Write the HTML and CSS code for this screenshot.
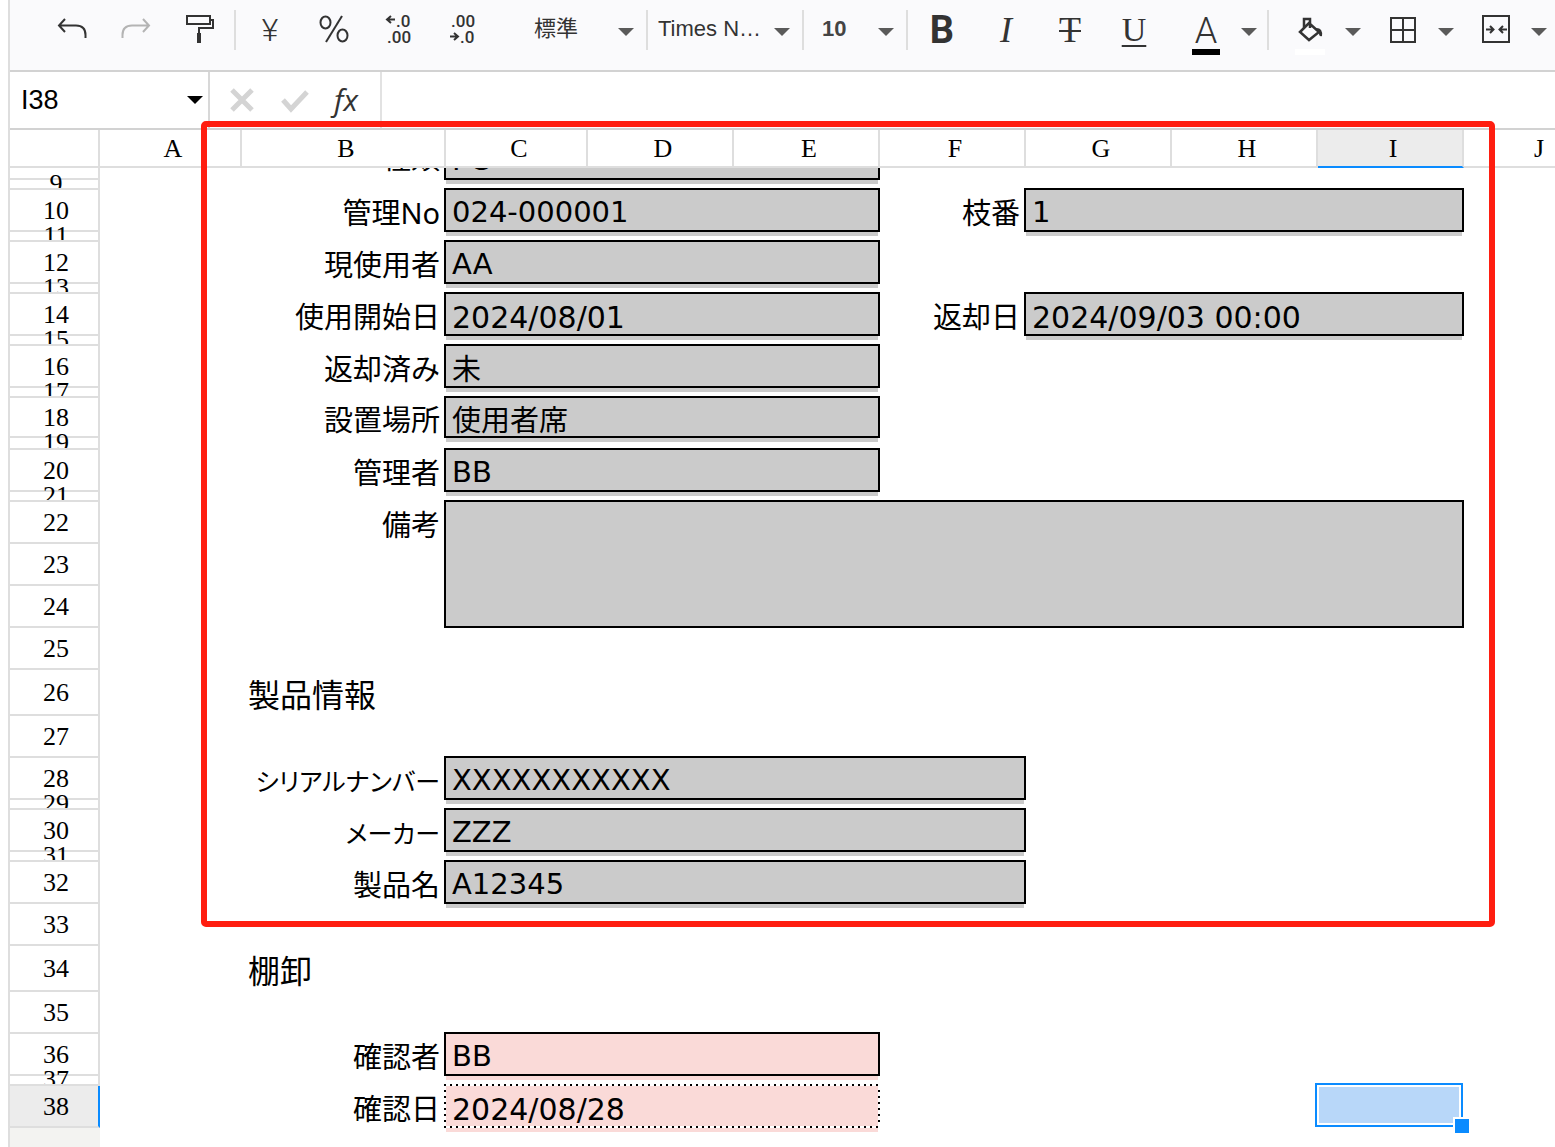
FILE: index.html
```html
<!DOCTYPE html>
<html lang="ja">
<head>
<meta charset="utf-8">
<meta name="viewport" content="width=device-width, initial-scale=1">
<title>スプレッドシート</title>
<link rel="stylesheet" href="styles.css">
</head>
<body>
<main class="app">
  <div class="toolbar" role="toolbar" aria-label="書式">
    <button class="tool" type="button" aria-label="元に戻す"><svg width="32" height="32" viewBox="0 0 32 32"><path d="M9 5 3 11.500 9 18M3 11.500h17q9.500 0 9.500 9.500v3"/></svg></button>
    <button class="tool off" type="button" aria-label="やり直し"><svg width="32" height="32" viewBox="0 0 32 32"><path d="M23 5l6 6.500L23 18M29 11.500H12q-9.500 0-9.500 9.500v3"/></svg></button>
    <button class="tool" type="button" aria-label="書式のコピー"><svg width="32" height="32" viewBox="0 0 32 32"><path d="M3 2h23v8H3zM26 6h3v8H15v6"/><path class="solid" d="M13 19h4v10h-4z"/></svg></button>
    <span class="sep"></span>
    <button class="tool" type="button" aria-label="通貨"><span class="yen">¥</span></button>
    <button class="tool" type="button" aria-label="パーセント"><svg width="32" height="32" viewBox="0 0 32 32"><ellipse cx="7.500" cy="8.500" rx="5" ry="6"/><ellipse cx="24.500" cy="21.500" rx="5" ry="6"/><path d="M24 2 8 28"/></svg></button>
    <button class="tool" type="button" aria-label="小数点以下の桁数を減らす"><svg width="32" height="32" viewBox="0 0 32 32"><path d="M9 2 5 5.500 9 9M5 5.500h8"/><text x="14" y="13">.0</text><text x="5" y="29">.00</text></svg></button>
    <button class="tool" type="button" aria-label="小数点以下の桁数を増やす"><svg width="32" height="32" viewBox="0 0 32 32"><path d="M8 19l4 3.500L8 26M12 22.500H4"/><text x="5" y="13">.00</text><text x="14" y="29">.0</text></svg></button>
    <span class="picker format"><select aria-label="表示形式"><option>標準</option></select></span>
    <span class="sep bare"></span>
    <span class="picker font"><select aria-label="フォント"><option>Times N…</option></select></span>
    <span class="sep bare"></span>
    <span class="picker size"><select aria-label="フォントサイズ"><option>10</option></select></span>
    <span class="sep near"></span>
    <button class="tool" type="button" aria-label="太字"><span class="bold">B</span></button>
    <button class="tool" type="button" aria-label="斜体"><span class="italic">I</span></button>
    <button class="tool" type="button" aria-label="取り消し線"><span class="strike">T</span></button>
    <button class="tool" type="button" aria-label="下線"><span class="under">U</span></button>
    <span class="split first"><button class="tool" type="button" aria-label="文字の色"><span class="color">A</span></button><button class="more" type="button" aria-label="文字の色を選択"></button></span>
    <span class="sep wide"></span>
    <span class="split"><button class="tool" type="button" aria-label="塗りつぶし"><span class="fill"><svg width="32" height="32" viewBox="0 0 32 32"><path class="thick" d="M6 19 15 10 25 19 15 27zM10 15V6h6v9"/><path class="solid" d="M21 15q8-1 7 8-3 1-3-3z"/></svg></span></button><button class="more" type="button" aria-label="塗りつぶしの色を選択"></button></span>
    <span class="split"><button class="tool" type="button" aria-label="罫線"><svg width="32" height="32" viewBox="0 0 32 32"><path d="M4 4h24v24H4zM16 4v24M4 16h24"/></svg></button><button class="more" type="button" aria-label="罫線を選択"></button></span>
    <span class="split"><button class="tool" type="button" aria-label="セルの結合"><svg width="32" height="32" viewBox="0 0 32 32"><path d="M3 2h26v26H3zM6 15.500h7M10 12l3.500 3.500L10 19M27 15.500h-7M23 12l-3.500 3.500L23 19"/></svg></button><button class="more" type="button" aria-label="セルの結合を選択"></button></span>
  </div>

  <div class="formula-bar">
    <div class="name-box"><input type="text" value="I38" aria-label="名前ボックス"><button class="more" type="button" aria-label="名前の一覧"></button></div>
    <div class="actions">
      <button type="button" aria-label="キャンセル"><svg width="32" height="32" viewBox="0 0 32 32"><path d="M6 6l20 20M26 6 6 26"/></svg></button>
      <button type="button" aria-label="入力"><svg width="32" height="32" viewBox="0 0 32 32"><path d="M4 16l8 9L28 8"/></svg></button>
      <button class="fx" type="button" aria-label="関数の挿入">fx</button>
    </div>
    <input class="formula" type="text" aria-label="数式">
  </div>

  <div class="sheet">
    <table>
      <colgroup><col class="c-head"><col class="c-narrow"><col class="c-label"><col class="c-narrow"><col><col><col><col><col><col><col></colgroup>
      <thead>
        <tr><td class="corner"></td><th scope="col">A</th><th scope="col">B</th><th scope="col">C</th><th scope="col">D</th><th scope="col">E</th><th scope="col">F</th><th scope="col">G</th><th scope="col">H</th><th scope="col" class="current">I</th><th scope="col">J</th></tr>
      </thead>
      <tbody>
        <tr class="cut"><th scope="row"></th><td></td><td><div class="label">種類</div></td><td colspan="3"><div class="field">PC</div></td><td colspan="5"></td></tr>
        <tr class="gap"><th scope="row"><div>9</div></th><td colspan="10"></td></tr>
        <tr><th scope="row"><div>10</div></th><td></td><td><div class="label">管理No</div></td><td colspan="3"><div class="field">024-000001</div></td><td><div class="label">枝番</div></td><td colspan="3"><div class="field">1</div></td><td></td></tr>
        <tr class="gap"><th scope="row"><div>11</div></th><td colspan="10"></td></tr>
        <tr><th scope="row"><div>12</div></th><td></td><td><div class="label">現使用者</div></td><td colspan="3"><div class="field">AA</div></td><td colspan="5"></td></tr>
        <tr class="gap"><th scope="row"><div>13</div></th><td colspan="10"></td></tr>
        <tr><th scope="row"><div>14</div></th><td></td><td><div class="label">使用開始日</div></td><td colspan="3"><div class="field low date">2024/08/01</div></td><td><div class="label">返却日</div></td><td colspan="3"><div class="field low date">2024/09/03 00:00</div></td><td></td></tr>
        <tr class="gap"><th scope="row"><div>15</div></th><td colspan="10"></td></tr>
        <tr><th scope="row"><div>16</div></th><td></td><td><div class="label">返却済み</div></td><td colspan="3"><div class="field low">未</div></td><td colspan="5"></td></tr>
        <tr class="gap"><th scope="row"><div>17</div></th><td colspan="10"></td></tr>
        <tr class="short"><th scope="row"><div>18</div></th><td></td><td><div class="label">設置場所</div></td><td colspan="3"><div class="field low">使用者席</div></td><td colspan="5"></td></tr>
        <tr class="gap tall"><th scope="row"><div>19</div></th><td colspan="10"></td></tr>
        <tr><th scope="row"><div>20</div></th><td></td><td><div class="label">管理者</div></td><td colspan="3"><div class="field">BB</div></td><td colspan="5"></td></tr>
        <tr class="gap"><th scope="row"><div>21</div></th><td colspan="10"></td></tr>
        <tr><th scope="row"><div>22</div></th><td></td><td><div class="label">備考</div></td><td colspan="7" rowspan="3"><div class="field memo"></div></td><td></td></tr>
        <tr><th scope="row"><div>23</div></th><td colspan="2"></td><td></td></tr>
        <tr><th scope="row"><div>24</div></th><td colspan="2"></td><td></td></tr>
        <tr><th scope="row"><div>25</div></th><td colspan="10"></td></tr>
        <tr class="section"><th scope="row"><div>26</div></th><td></td><td colspan="9"><div class="title">製品情報</div></td></tr>
        <tr><th scope="row"><div>27</div></th><td colspan="10"></td></tr>
        <tr><th scope="row"><div>28</div></th><td></td><td><div class="label kana">シリアルナンバー</div></td><td colspan="4"><div class="field">XXXXXXXXXXX</div></td><td colspan="4"></td></tr>
        <tr class="gap"><th scope="row"><div>29</div></th><td colspan="10"></td></tr>
        <tr><th scope="row"><div>30</div></th><td></td><td><div class="label kana">メーカー</div></td><td colspan="4"><div class="field">ZZZ</div></td><td colspan="4"></td></tr>
        <tr class="gap"><th scope="row"><div>31</div></th><td colspan="10"></td></tr>
        <tr><th scope="row"><div>32</div></th><td></td><td><div class="label">製品名</div></td><td colspan="4"><div class="field">A12345</div></td><td colspan="4"></td></tr>
        <tr><th scope="row"><div>33</div></th><td colspan="10"></td></tr>
        <tr class="section"><th scope="row"><div>34</div></th><td></td><td colspan="9"><div class="title">棚卸</div></td></tr>
        <tr><th scope="row"><div>35</div></th><td colspan="10"></td></tr>
        <tr><th scope="row"><div>36</div></th><td></td><td><div class="label">確認者</div></td><td colspan="3"><div class="field pink">BB</div></td><td colspan="5"></td></tr>
        <tr class="gap"><th scope="row"><div>37</div></th><td colspan="10"></td></tr>
        <tr><th scope="row" class="current"><div>38</div></th><td></td><td><div class="label">確認日</div></td><td colspan="3"><div class="field pink dotted low date">2024/08/28</div></td><td colspan="3"></td><td class="selected"><div class="selection"></div></td><td></td></tr>
        <tr class="rest"><td class="filler"></td><td colspan="10"></td></tr>
      </tbody>
    </table>
    <div class="highlight"></div>
  </div>
</main>
</body>
</html>
```
FILE: styles.css
```css
* { box-sizing: border-box; }

html, body { height: 100%; }

body {
  margin: 0;
  overflow: hidden;
  background: #fff;
  color: #000;
  font-family: "Liberation Sans", "Noto Sans CJK JP", sans-serif;
}

button, input, select {
  margin: 0;
  padding: 0;
  border: 0;
  outline: 0;
  background: transparent;
  color: inherit;
  font: inherit;
  appearance: none;
}

.app {
  display: flex;
  flex-direction: column;
  min-height: 100%;
  margin-left: 8px;
  border-left: 2px solid #dedede;
}

/* Toolbar */
.toolbar {
  display: flex;
  align-items: flex-start;
  height: 72px;
  padding: 0 0 0 30px;
  border-bottom: 2px solid #d2d2d2;
  background: #fafafc;
  color: #333;
  font-size: 22px;
}

.toolbar > * { flex: none; }

.tool {
  display: flex;
  align-items: center;
  justify-content: center;
  width: 64px;
  height: 60px;
}

svg {
  display: block;
  overflow: visible;
  fill: none;
  stroke: #333;
  stroke-width: 2;
}

svg text {
  fill: #333;
  stroke: none;
  font: 500 17px/1 Roboto, sans-serif;
}

svg .solid { fill: #333; stroke: none; }
svg .thick { stroke-width: 2.5; }
.off svg { stroke: #b4b4b4; }

.sep {
  width: 2px;
  height: 40px;
  margin: 10px 2px 0;
  background: #dedede;
}

.sep.bare { margin: 10px 0 0; }
.sep.near { margin: 10px 2px 0 0; }
.sep.wide { margin: 10px 9px 0 0; }

.picker {
  display: flex;
  position: relative;
  height: 56px;
}

.picker select { width: 100%; }

.picker::after {
  content: "";
  position: absolute;
  top: 28px;
  right: 12px;
  border: 8px solid transparent;
  border-top-color: #5a5a5a;
  border-bottom: 0;
  pointer-events: none;
}

.format { width: 152px; }
.format select { padding-left: 40px; }
.font { width: 154px; }
.font select { padding-left: 10px; }
.size { width: 102px; font-weight: bold; color: #444; }
.size select { padding-left: 18px; }

.yen { font: 300 32px/32px Roboto, sans-serif; }
.bold { font: bold 38px/40px Roboto, sans-serif; }
.italic { font: italic 36px/36px "Liberation Serif", serif; }
.strike { font: 36px/36px "Liberation Serif", serif; text-decoration: line-through 2px; }
.under { font: 34px/36px "Liberation Serif", serif; text-decoration: underline 2px; text-underline-offset: 4px; }

.color, .fill {
  display: flex;
  justify-content: center;
  width: 28px;
  height: 44px;
  margin-top: 6px;
  border-bottom: 6px solid #000;
  font: 300 36px/40px Roboto, sans-serif;
}

.fill { width: 30px; border-color: #fff; }
.fill svg { margin-top: 2px; }

.split { display: flex; width: 93px; }
.split.first { margin-left: 8px; }

.more {
  display: flex;
  align-items: center;
  justify-content: center;
  width: 22px;
  height: 64px;
}

.more::after {
  content: "";
  border: 8px solid transparent;
  border-top-color: #5a5a5a;
  border-bottom: 0;
}

/* Formula bar */
.formula-bar {
  display: flex;
  height: 58px;
  border-bottom: 2px solid #d2d2d2;
}

.name-box {
  display: flex;
  align-items: center;
  width: 200px;
  padding: 0 2px 0 11px;
  border-right: 2px solid #d8d8d8;
  font-size: 27px;
}

.name-box input { flex: 1; min-width: 0; }
.name-box .more::after { border-top-color: #000; }

.actions {
  display: flex;
  align-items: center;
  width: 172px;
  padding-left: 16px;
  gap: 21px;
  border-right: 2px solid #e2e2e2;
}

.actions svg { stroke: #d4d4d4; stroke-width: 5; }
.fx { width: 28px; color: #333; font: italic 500 30px/36px "Open Sans", sans-serif; }
.formula { flex: 1; min-width: 0; padding: 0 12px; font-size: 27px; }

/* Sheet */
.sheet {
  position: relative;
  flex: 1;
}

table {
  width: 1600px;
  table-layout: fixed;
  border-spacing: 0;
}

col { width: 146px; }
.c-head { width: 90px; }
.c-narrow { width: 142px; }
.c-label { width: 204px; }

th, td { height: inherit; padding: 0; }

th { font: 26px/30px "Liberation Serif", serif; }

thead th, .corner {
  height: 38px;
  border: solid #dedede;
  border-width: 0 2px 2px 0;
}

thead th { padding: 2px 0 0 6px; }
thead .current { border-bottom-color: #0a8bff; background: #ececec; }

tbody tr { --row: 42px; height: var(--row); }
tbody .gap { --row: 10px; }
tbody .cut { --row: 12px; }
tbody .short { --row: 40px; }
tbody .tall { --row: 12px; }
tbody .section { --row: 46px; }

tbody th {
  border: solid #dedede;
  border-width: 0 2px 2px 0;
}

tbody th div {
  display: flex;
  align-items: center;
  justify-content: center;
  height: calc(var(--row) - 2px);
  padding: 2px 0 0 4px;
  clip-path: inset(-10px 0 0 0);
}

.gap th div { padding: 0 0 0 4px; }

tbody .current { border-right-color: #0a8bff; background: #ececec; }
.filler { background: #f3f3f1; }
.rest { height: 24px; }

.label, .field, .title {
  display: flex;
  align-items: center;
  height: var(--row);
  white-space: nowrap;
  font: 29px/34px "Noto Sans", "Noto Sans CJK JP", sans-serif;
}

.label { justify-content: flex-end; padding: 4px 6px 0 0; }
.kana { font-feature-settings: "palt"; font-size: 25px; }
.title { padding: 4px 0 0 6px; font-size: 32px; }

.field {
  height: calc(var(--row) + 2px);
  margin: -2px 0 0 -2px;
  padding: 3px 0 0 6px;
  border: 2px solid #000;
  background: #cbcbcb;
  box-shadow: 0 6px 0 -2px #cbcbcb;
  font-family: "DejaVu Sans", "Noto Sans CJK JP", sans-serif;
}

.field.low { padding-top: 8px; }
.field.date { font-size: 30px; }
.memo { height: 128px; box-shadow: none; }

.pink {
  background: #fadad8;
  box-shadow: 0 6px 0 -2px #fadad8;
}

/* Sparse square dots, one every 6px, drawn inside a transparent border */
.dotted {
  --across: repeating-linear-gradient(90deg, #000 0 2px, #fff 2px 6px);
  --down: repeating-linear-gradient(#000 0 2px, #fff 2px 6px);
  border-color: transparent;
  background:
    var(--across) top / 100% 2px no-repeat border-box,
    var(--across) bottom / 100% 2px no-repeat border-box,
    var(--down) left / 2px 100% no-repeat border-box,
    var(--down) right / 2px 100% no-repeat border-box,
    #fadad8;
}

/* Row scrolled partly under the column headings */
.cut .label, .cut .field {
  align-items: flex-end;
  height: var(--row);
  margin-top: 0;
  padding-top: 0;
  overflow: hidden;
}

.cut .label { padding-bottom: 5px; }
.cut .field { padding-bottom: 1px; border-top: 0; }

/* Active cell frame with its fill handle */
.selected { position: relative; }

.selection {
  position: absolute;
  top: -3px;
  left: -3px;
  width: 148px;
  height: 44px;
  padding: 2px;
  border: 2px solid #0a8bff;
  background: #b8d7f9 content-box;
}

.selection::after {
  content: "";
  position: absolute;
  right: -8px;
  bottom: -8px;
  width: 14px;
  height: 14px;
  border: solid #fff;
  border-width: 2px 0 0 2px;
  background: #0a8bff;
}

/* Red marker around the asset details */
.highlight {
  position: absolute;
  top: -9px;
  left: 191px;
  width: 1294px;
  height: 806px;
  border: 6px solid #ff1e10;
  border-radius: 5px;
  pointer-events: none;
}
```
